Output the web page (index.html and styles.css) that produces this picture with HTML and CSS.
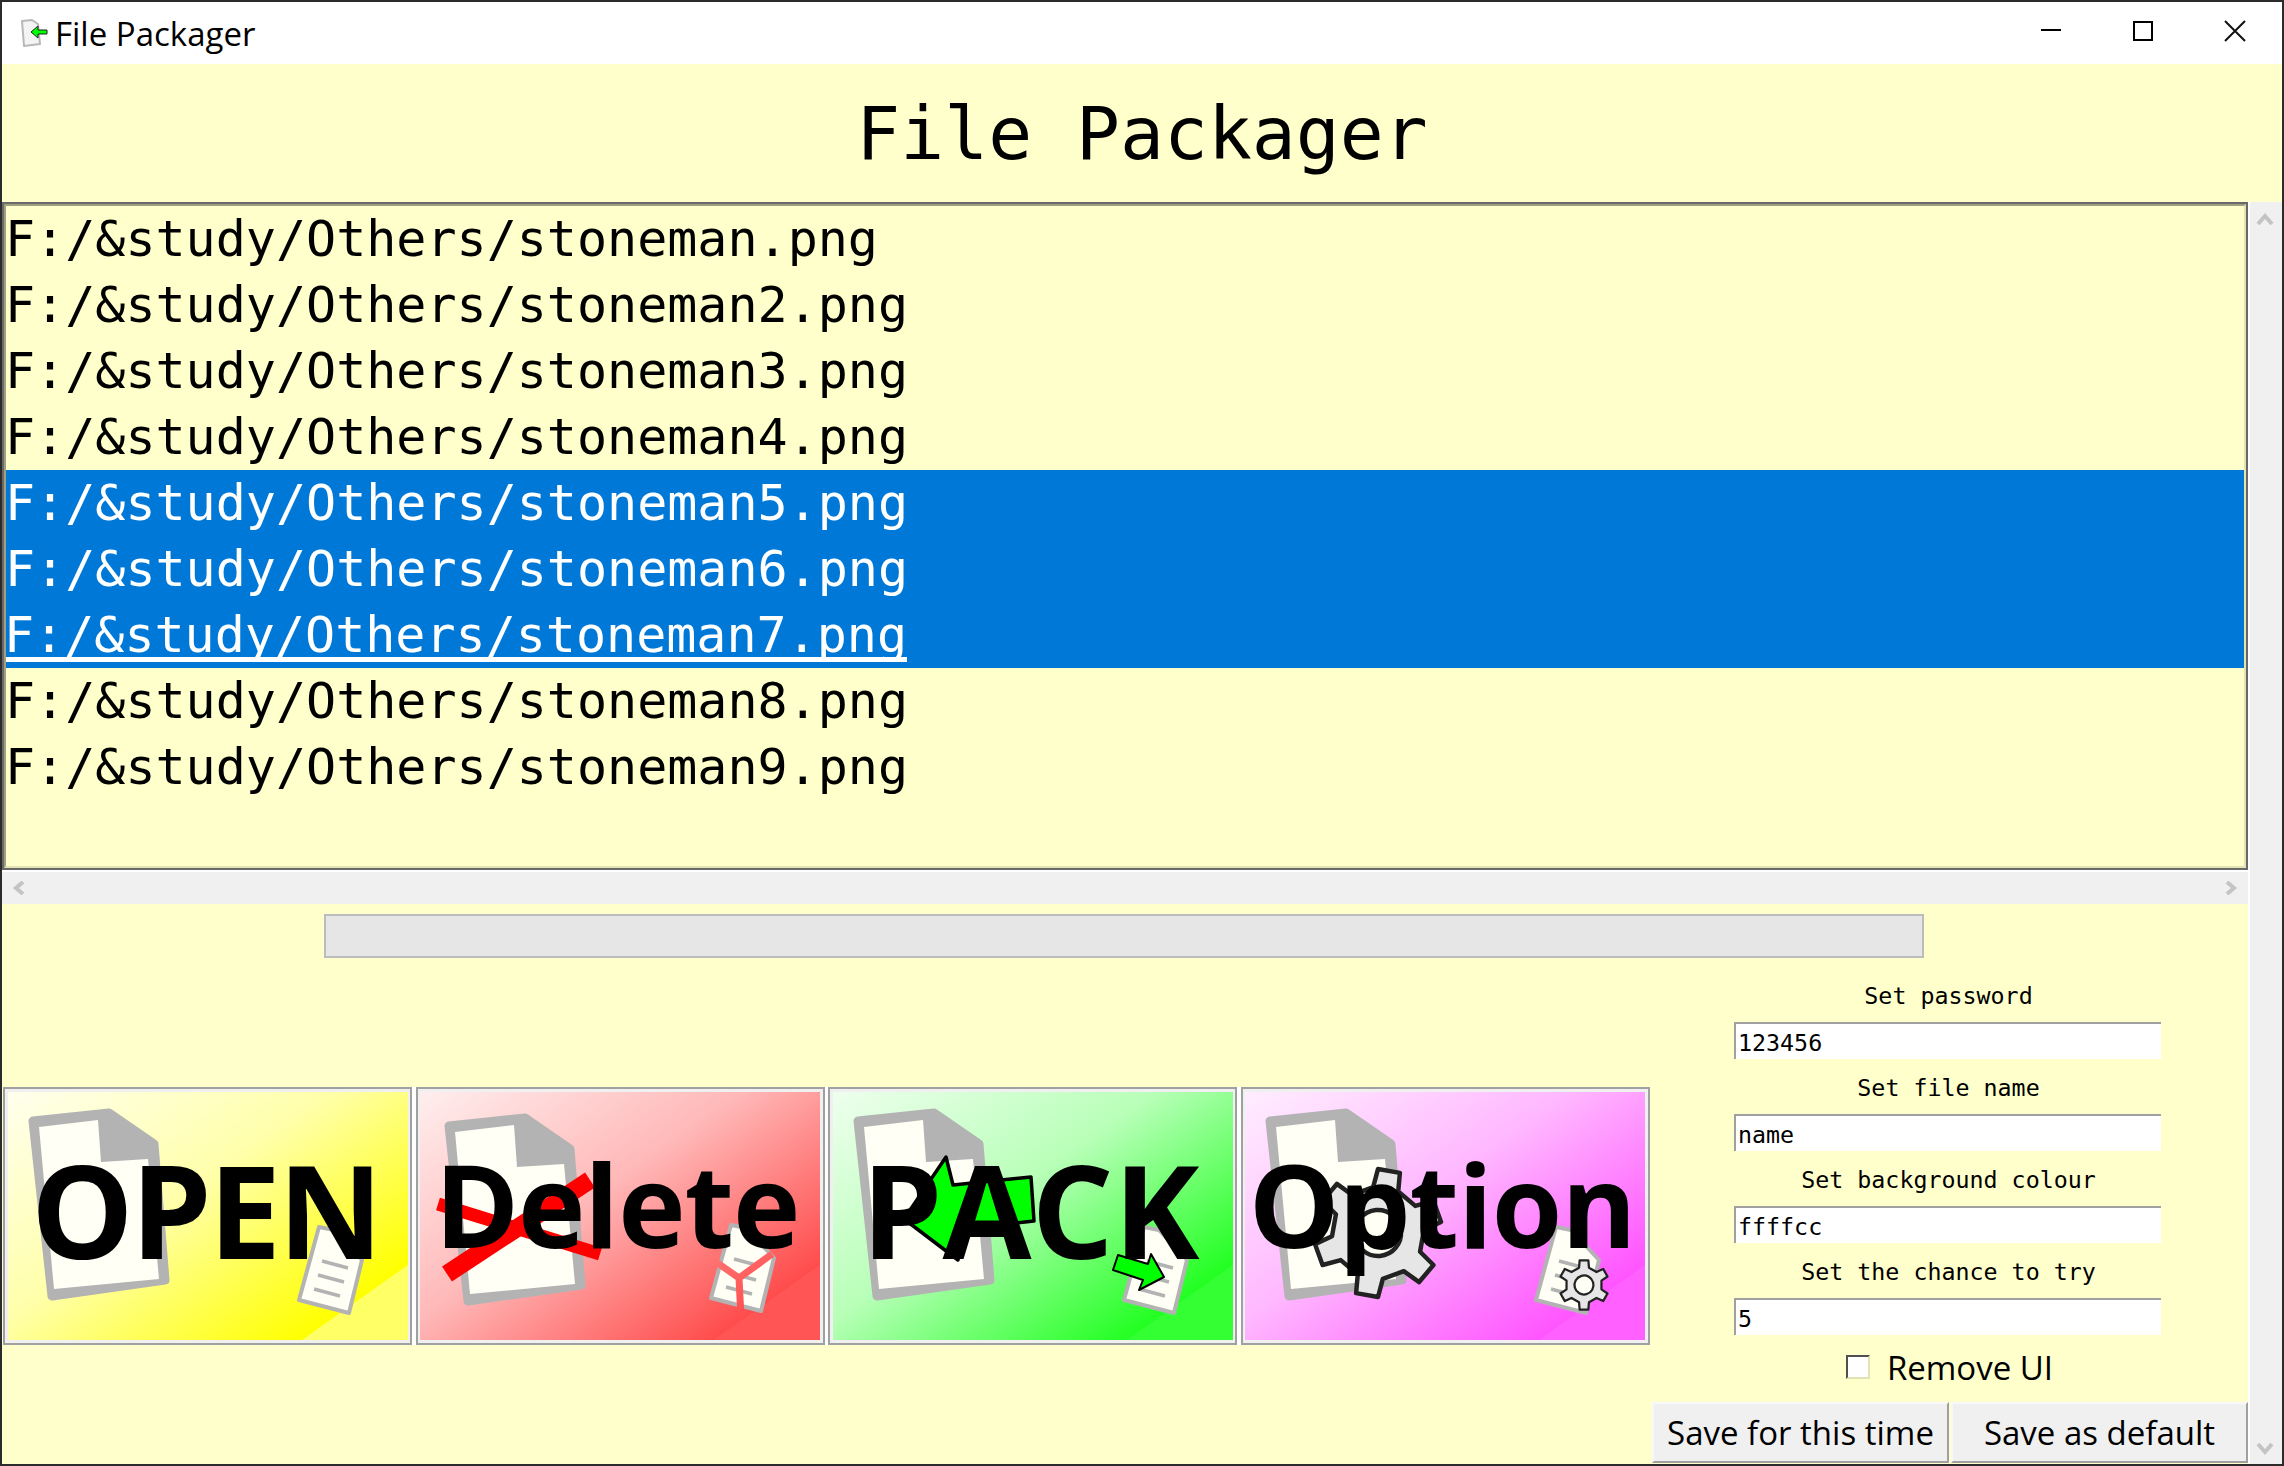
FILE: index.html
```html
<!DOCTYPE html>
<html lang="en">
<head>
    <meta charset="UTF-8">
    <title>File Packager</title>
    <link rel="stylesheet" href="styles.css">
</head>
<body>

    <!-- shared drawings for the four big buttons -->
    <svg class="defs" width="0" height="0">
        <defs>
            <g id="big-doc">
                <path d="M25 29 L101 21 L146 52 L157 188 L44 204 Z" fill="#b3b3b3" stroke="#b3b3b3" stroke-width="9" stroke-linejoin="round"/>
                <path d="M31 35 L90 28 L93 70 L140 67 L151 187 L46 197 Z" fill="#fffff6"/>
            </g>
            <g id="small-doc">
                <path d="M311 135 L326 138 L354 168 L341 221 L291 208 Z" fill="#fffff6" stroke="#b3b3b3" stroke-width="4" stroke-linejoin="round"/>
            </g>
            <g id="small-lines" stroke="#b3b3b3" stroke-width="3.5">
                <path d="M314 169 L340 176"/>
                <path d="M310 183 L336 190"/>
                <path d="M306 197 L332 204"/>
            </g>
            <polygon id="gear" points="69.2,-19.8 98.5,-17.4 98.5,17.4 69.2,19.8 51.8,50 64.3,76.6 34.2,94 17.4,69.9 -17.4,69.9 -34.2,94 -64.3,76.6 -51.8,50 -69.2,19.8 -98.5,17.4 -98.5,-17.4 -69.2,-19.8 -51.8,-50 -64.3,-76.6 -34.2,-94 -17.4,-69.9 17.4,-69.9 34.2,-94 64.3,-76.6 51.8,-50"/>
            <linearGradient id="grad-open" gradientUnits="userSpaceOnUse" x1="0" y1="0" x2="215" y2="304">
                <stop offset="0" stop-color="#ffffee"/>
                <stop offset="0.5" stop-color="#ffffaa"/>
                <stop offset="0.999" stop-color="#ffff00"/>
                <stop offset="1" stop-color="#ffff66"/>
            </linearGradient>
            <linearGradient id="grad-delete" gradientUnits="userSpaceOnUse" x1="0" y1="0" x2="215" y2="304">
                <stop offset="0" stop-color="#ffeeee"/>
                <stop offset="0.5" stop-color="#ffb8b8"/>
                <stop offset="0.999" stop-color="#ff4c4c"/>
                <stop offset="1" stop-color="#ff5555"/>
            </linearGradient>
            <linearGradient id="grad-pack" gradientUnits="userSpaceOnUse" x1="0" y1="0" x2="215" y2="304">
                <stop offset="0" stop-color="#eeffee"/>
                <stop offset="0.5" stop-color="#b8ffb8"/>
                <stop offset="0.999" stop-color="#22ff22"/>
                <stop offset="1" stop-color="#33ff33"/>
            </linearGradient>
            <linearGradient id="grad-option" gradientUnits="userSpaceOnUse" x1="0" y1="0" x2="215" y2="304">
                <stop offset="0" stop-color="#ffeeff"/>
                <stop offset="0.5" stop-color="#ffb8ff"/>
                <stop offset="0.999" stop-color="#ff55ff"/>
                <stop offset="1" stop-color="#ff60ff"/>
            </linearGradient>
        </defs>
    </svg>

    <div class="window">
        <div class="titlebar">
            <svg class="app-icon" width="30" height="30" viewBox="0 0 30 30">
                <path d="M2 3 L12 2 L18 6 L20 26 L4 28 Z" fill="#f4f4f4" stroke="#b8b8b8" stroke-width="2" stroke-linejoin="round"/>
                <path d="M11 14 L18 8 L18 12 L27 12 L27 16 L18 16 L18 20 Z" fill="#00ff00" stroke="#222" stroke-width="1"/>
            </svg>
            <span class="app-name">File Packager</span>
            <div class="controls">
                <svg width="24" height="24" viewBox="0 0 24 24"><path d="M2 11 H22" stroke="#000" stroke-width="2"/></svg>
                <svg width="24" height="24" viewBox="0 0 24 24"><rect x="3" y="3" width="18" height="18" fill="none" stroke="#000" stroke-width="2"/></svg>
                <svg width="24" height="24" viewBox="0 0 24 24"><path d="M2 2 L22 22 M22 2 L2 22" stroke="#111" stroke-width="2"/></svg>
            </div>
        </div>

        <h1>File Packager</h1>

        <div class="content">
            <div class="left">
                <div class="listbox">
                    <ul class="files">
                        <li>F:/&amp;study/Others/stoneman.png</li>
                        <li>F:/&amp;study/Others/stoneman2.png</li>
                        <li>F:/&amp;study/Others/stoneman3.png</li>
                        <li>F:/&amp;study/Others/stoneman4.png</li>
                        <li class="selected">F:/&amp;study/Others/stoneman5.png</li>
                        <li class="selected">F:/&amp;study/Others/stoneman6.png</li>
                        <li class="selected active"><span class="focus">F:/&amp;study/Others/stoneman7.png</span></li>
                        <li>F:/&amp;study/Others/stoneman8.png</li>
                        <li>F:/&amp;study/Others/stoneman9.png</li>
                    </ul>
                </div>
                <div class="hscroll">
                    <svg width="14" height="14" viewBox="0 0 14 14"><path d="M11 1 L4 7 L11 13" fill="none" stroke="#c4c4c4" stroke-width="4"/></svg>
                    <svg width="14" height="14" viewBox="0 0 14 14"><path d="M3 1 L10 7 L3 13" fill="none" stroke="#c4c4c4" stroke-width="4"/></svg>
                </div>
                <div class="progress"></div>

                <div class="lower">
                    <div class="tools">
                        <button class="tool">
                            <svg width="400" height="248" viewBox="0 0 400 248">
                                <rect width="400" height="248" fill="url(#grad-open)"/>
                                <use href="#big-doc"/>
                                <use href="#small-doc"/>
                                <use href="#small-lines"/>
                            </svg>
                            <span class="tool-label label-open">OPEN</span>
                        </button>
                        <button class="tool">
                            <svg width="400" height="248" viewBox="0 0 400 248">
                                <rect width="400" height="248" fill="url(#grad-delete)"/>
                                <use href="#big-doc" transform="translate(4 5)"/>
                                <use href="#small-doc" transform="translate(0 -2)"/>
                                <use href="#small-lines" transform="translate(0 -2)"/>
                                <path d="M289 165 L319 186 L352 162 M319 186 L321 226" fill="none" stroke="url(#grad-delete)" stroke-width="7"/>
                                <path d="M18 112 L180 162" stroke="#f00" stroke-width="13"/>
                                <path d="M27 182 L170 88" stroke="#f00" stroke-width="18"/>
                            </svg>
                            <span class="tool-label label-lower">Delete</span>
                        </button>
                        <button class="tool">
                            <svg width="400" height="248" viewBox="0 0 400 248">
                                <rect width="400" height="248" fill="url(#grad-pack)"/>
                                <use href="#big-doc"/>
                                <path d="M113 65 L120 93 L198 85 L201 129 L130 137 L125 168 L71 127 Z" fill="#0f0" stroke="#000" stroke-width="3.5" stroke-linejoin="round"/>
                                <use href="#small-doc"/>
                                <use href="#small-lines"/>
                                <path d="M285 163 L280 178 L310 188 L306 198 L331 185 L318 162 L315 172 Z" fill="#0f0" stroke="#000" stroke-width="2" stroke-linejoin="round"/>
                            </svg>
                            <span class="tool-label label-pack">PACK</span>
                        </button>
                        <button class="tool">
                            <svg width="400" height="248" viewBox="0 0 400 248">
                                <rect width="400" height="248" fill="url(#grad-option)"/>
                                <use href="#big-doc"/>
                                <g transform="translate(133 141) rotate(40) scale(0.64)">
                                    <use href="#gear" fill="#e6e6e6" stroke="#222" stroke-width="7" stroke-linejoin="round"/>
                                    <circle r="36" fill="#fffff6" stroke="#222" stroke-width="7"/>
                                </g>
                                <use href="#small-doc"/>
                                <use href="#small-lines"/>
                                <g transform="translate(339 193) rotate(30) scale(0.25)">
                                    <use href="#gear" fill="#e6e6e6" stroke="#222" stroke-width="9" stroke-linejoin="round"/>
                                    <circle r="38" fill="#fffff6" stroke="#222" stroke-width="9"/>
                                </g>
                            </svg>
                            <span class="tool-label label-lower">Option</span>
                        </button>
                    </div>

                    <div class="panel">
                        <div class="fields">
                            <label class="field-label">Set password</label>
                            <input class="field" type="text" value="123456">
                            <label class="field-label">Set file name</label>
                            <input class="field" type="text" value="name">
                            <label class="field-label">Set background colour</label>
                            <input class="field" type="text" value="ffffcc">
                            <label class="field-label">Set the chance to try</label>
                            <input class="field" type="text" value="5">
                        </div>
                        <label class="remove-ui"><input class="check" type="checkbox">Remove UI</label>
                        <div class="save-row">
                            <button class="save">Save for this time</button>
                            <button class="save">Save as default</button>
                        </div>
                    </div>
                </div>
            </div>

            <div class="vscroll">
                <svg width="18" height="14" viewBox="0 0 18 14"><path d="M2 12 L9 4 L16 12" fill="none" stroke="#c4c4c4" stroke-width="4"/></svg>
                <svg width="18" height="14" viewBox="0 0 18 14"><path d="M2 2 L9 10 L16 2" fill="none" stroke="#c4c4c4" stroke-width="4"/></svg>
            </div>
        </div>
    </div>

</body>
</html>
```

FILE: styles.css
```css
* {
    box-sizing: border-box;
}
html, body {
    margin: 0;
    height: 100%;
}
body {
    background: #2b2b2b;
    overflow: hidden;
}
.defs {
    position: absolute;
}
.window {
    width: 2280px;
    height: 1462px;
    margin: 2px 2px 2px 2px;
    background: #ffffcc;
    display: flex;
    flex-direction: column;
    font-family: "DejaVu Sans Mono", monospace;
    color: #000;
}

/* title bar */
.titlebar {
    height: 62px;
    background: #fff;
    display: flex;
    align-items: center;
    padding-left: 18px;
    flex: none;
}
.app-icon {
    margin-right: 5px;
}
.app-name {
    font-family: "Open Sans", sans-serif;
    font-size: 33px;
}
.controls {
    margin-left: auto;
    display: flex;
    gap: 68px;
    padding: 0 35px 4px 0;
    align-items: center;
}

h1 {
    height: 138px;
    margin: 0;
    padding-top: 1px;
    flex: none;
    font-size: 73px;
    font-weight: normal;
    line-height: 138px;
    text-align: center;
}

.content {
    flex: 1;
    display: flex;
    min-height: 0;
}
.left {
    width: 2246px;
    display: flex;
    flex-direction: column;
}

/* file list */
.listbox {
    height: 668px;
    border: 2px solid #696969;
    flex: none;
}
.files {
    height: 100%;
    margin: 0;
    padding: 0;
    list-style: none;
    border: 2px solid;
    border-color: #a0a080 #e3e3b3 #e3e3b3 #a0a080;
    font-size: 50px;
    overflow: hidden;
}
.files li {
    height: 66px;
    line-height: 66px;
    text-indent: -1px;
    white-space: pre;
}
.files .selected {
    background: #0078d7;
    color: #fff;
}
.focus {
    display: inline-block;
    height: 60px;
    border-bottom: 5px solid #fff;
    line-height: 66px;
    vertical-align: top;
}

.hscroll {
    height: 34px;
    background: #f0f0f0;
    border-top: 2px solid #fff;
    flex: none;
    display: flex;
    justify-content: space-between;
    align-items: center;
    padding: 0 10px 0 10px;
}
.vscroll {
    width: 34px;
    background: #f0f0f0;
    border-left: 2px solid #fff;
    display: flex;
    flex-direction: column;
    justify-content: space-between;
    align-items: center;
    padding: 10px 2px 8px 0;
}

.progress {
    width: 1600px;
    height: 44px;
    margin: 10px 0 0 322px;
    background: #e6e6e6;
    border: 2px solid #bcbcbc;
    flex: none;
}

.lower {
    flex: 1;
    display: flex;
}

/* big picture buttons */
.tools {
    display: flex;
    gap: 3.5px;
    align-self: flex-start;
    margin: 129px 1.5px 0 1px;
    background: #fff;
}
.tool {
    position: relative;
    width: 409px;
    padding: 3px 2px;
    border: 2px solid #a0a0a0;
    background: #f0f0f0;
    line-height: 0;
    display: flex;
    justify-content: center;
}
.tool-label {
    position: absolute;
    inset: 0;
    display: flex;
    justify-content: center;
    align-items: center;
    font-family: "Open Sans", sans-serif;
    font-weight: 700;
    line-height: 1;
    color: #000;
}
.label-open {
    font-size: 129px;
    letter-spacing: -3px;
    padding: 0 4px 14px 0;
}
.label-pack {
    font-size: 129px;
    letter-spacing: 0;
    padding: 0 4px 14px 0;
}
.label-lower {
    font-size: 114px;
    letter-spacing: -1px;
    padding: 0 6px 24px 0;
}

/* settings on the right */
.panel {
    flex: 1;
    display: flex;
    flex-direction: column;
    align-items: center;
    padding-top: 10px;
}
.fields {
    width: 427px;
    margin-right: 4px;
    display: flex;
    flex-direction: column;
}
.field-label {
    height: 55px;
    padding-left: 2px;
    line-height: 55px;
    text-align: center;
    font-size: 23.3px;
}
.field {
    width: 100%;
    height: 37px;
    margin: -1px 0 1px 0;
    padding: 2px 0 0 2px;
    border: 0;
    border-top: 2px solid #a0a0a0;
    border-left: 2px solid #a0a0a0;
    background: #fff;
    font-family: "DejaVu Sans Mono", monospace;
    font-size: 23.3px;
    outline: none;
}
.remove-ui {
    display: flex;
    align-items: center;
    gap: 17px;
    height: 40px;
    margin-top: 11px;
    font-family: "Open Sans", sans-serif;
    font-size: 33px;
}
.check {
    appearance: none;
    width: 24px;
    height: 24px;
    margin: 0;
    background: #fff;
    border: 2px solid;
    border-color: #505050 #e3e3b3 #e3e3b3 #505050;
}
.save-row {
    width: 100%;
    display: flex;
    gap: 2px;
    margin-top: 15px;
    padding-left: 1px;
}
.save {
    flex: 1;
    height: 61px;
    padding: 0;
    background: #f0f0f0;
    border: 2px solid;
    border-color: #f8f8f8 #a0a0a0 #a0a0a0 #f8f8f8;
    font-family: "Open Sans", sans-serif;
    font-size: 33px;
    color: #000;
}
```
